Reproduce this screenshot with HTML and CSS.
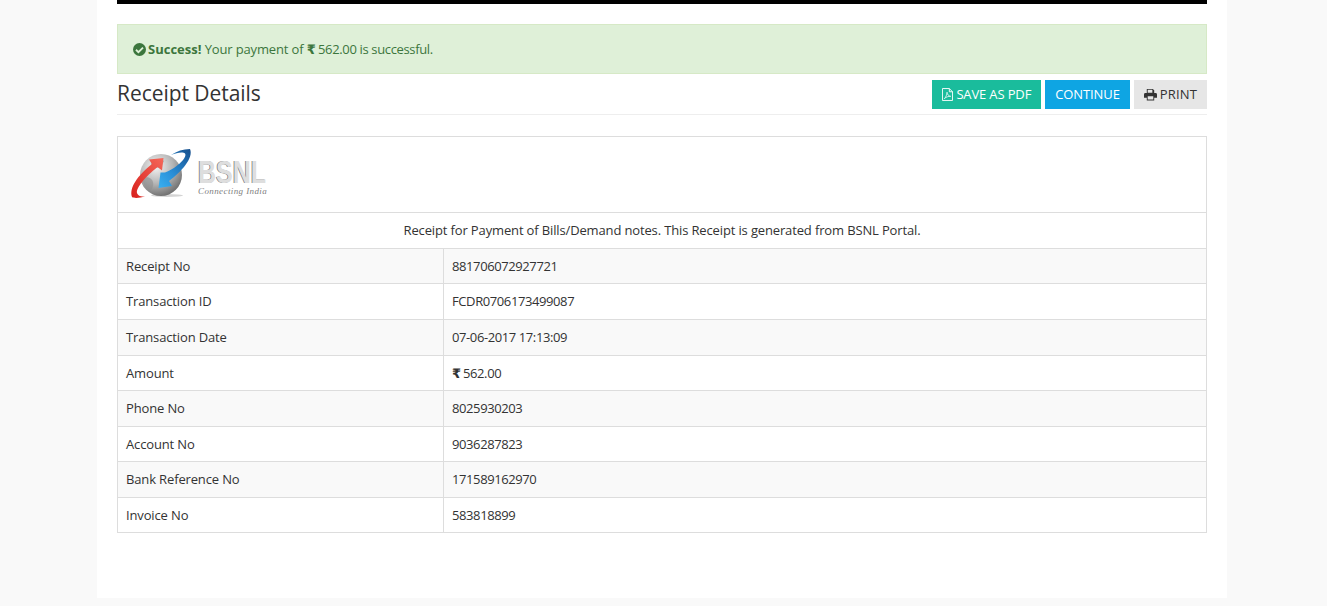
FILE: index.html
```html
<!DOCTYPE html>
<html>

<head>
    <meta charset="UTF-8">
    <title>Receipt Details</title>
    <link rel="stylesheet" href="styles.css">
</head>

<body>
    <div class="container">
        <div class="top-bar"></div>

        <div class="alert-success">
            <svg class="icon-check" viewBox="0 0 24 24">
                <circle cx="12" cy="12" r="12" fill="#3c763d"></circle>
                <path d="M5.500 12.500l4.500 4.500 8.500-8.500" fill="none" stroke="#dff0d8" stroke-width="3.400"></path>
            </svg>
            <div><strong>Success!</strong> Your payment of <span class="rupee">₹</span> <span class="tight">562.00 is successful.</span></div>
        </div>

        <div class="page-header">
            <h3>Receipt Details</h3>
            <div class="actions">
                <a class="btn btn-pdf">
                    <svg class="icon-btn" viewBox="0 0 12 14">
                        <path d="M.5.5h7.500l3.500 3.500v9.500h-11z M8 .5v3.500h3.500" fill="none" stroke="#fff" stroke-width="1"></path>
                        <path d="M2.500 11.500c1.500-1 3-4.500 3-7 .2 2.500 1.500 4 4 4.500-2.500-.2-5 .8-7 2.500z" fill="none" stroke="#fff" stroke-width=".8"></path>
                    </svg>
                    SAVE AS PDF
                </a>
                <a class="btn btn-continue">CONTINUE</a>
                <a class="btn btn-print">
                    <svg class="icon-btn icon-print" viewBox="0 0 14 13">
                        <path d="M3 5V.5h6.500L11 2v3h1.500A1.500 1.500 0 0 1 14 6.500V10h-3v3H3v-3H0V6.500A1.500 1.500 0 0 1 1.500 5z" fill="#333"></path>
                        <path d="M4 1.500h5v3H4z M4 8.500h6v3.500H4z" fill="#e6e6e6"></path>
                    </svg>
                    PRINT
                </a>
            </div>
        </div>

        <table class="receipt">
            <colgroup>
                <col class="col-label">
                <col>
            </colgroup>
            <tr>
                <td class="logo-cell" colspan="2">
                    <div class="logo">
                        <svg class="logo-mark" viewBox="0 0 60 52">
                            <defs>
                                <radialGradient id="globe" cx="38%" cy="30%" r="75%">
                                    <stop offset="0" stop-color="#f4f4f4"></stop>
                                    <stop offset=".55" stop-color="#b4b4b4"></stop>
                                    <stop offset="1" stop-color="#6a6a6a"></stop>
                                </radialGradient>
                                <linearGradient id="red" x1="0" y1="1" x2="1" y2="0">
                                    <stop offset="0" stop-color="#d8201c"></stop>
                                    <stop offset="1" stop-color="#f5685a"></stop>
                                </linearGradient>
                                <linearGradient id="blue" x1="1" y1="0" x2="0" y2="1">
                                    <stop offset="0" stop-color="#174f8c"></stop>
                                    <stop offset=".6" stop-color="#2a8fd8"></stop>
                                    <stop offset="1" stop-color="#3ab0f0"></stop>
                                </linearGradient>
                            </defs>
                            <ellipse cx="36" cy="47.500" rx="16" ry="1.500" fill="#d4d4d4"></ellipse>
                            <circle cx="30" cy="27" r="21" fill="url(#globe)"></circle>
                            <path d="M20 14c4-3 10-3 13-1l-3 6-5 1-5-3z M12 30c4-2 9 0 10 4s-1 8-4 9c-3-3-7-8-6-13z" fill="#8f8f8f" opacity=".6"></path>
                            <path d="M1 49C-2 40 6 28 21 16l-3-4.500L32.500 10 31 22.500 26.500 19C14 29 5 40 6 45c1 3 4 3.500 8 3.500-5 1.500-11 2-13 .5z" fill="url(#red)"></path>
                            <path d="M59 1c-7 0-13 2-19 6 6-2.500 12-3.500 14-1.500 2.500 3-6 13.500-20 19l-4.500 0L27.500 40 41 38l-3-5C50 24 63 10 59 1z" fill="url(#blue)"></path>
                        </svg>
                        <div class="logo-text">
                            <div class="logo-name">BSNL</div>
                            <div class="logo-tag">Connecting India</div>
                        </div>
                    </div>
                </td>
            </tr>
            <tr>
                <td class="caption" colspan="2">Receipt for Payment of Bills/Demand notes. This Receipt is generated from BSNL Portal.</td>
            </tr>
            <tr class="odd">
                <td>Receipt No</td>
                <td class="value">881706072927721</td>
            </tr>
            <tr>
                <td>Transaction ID</td>
                <td class="value">FCDR0706173499087</td>
            </tr>
            <tr class="odd">
                <td>Transaction Date</td>
                <td class="value">07-06-2017 17:13:09</td>
            </tr>
            <tr>
                <td>Amount</td>
                <td class="value"><span class="rupee">₹</span> 562.00</td>
            </tr>
            <tr class="odd">
                <td>Phone No</td>
                <td class="value">8025930203</td>
            </tr>
            <tr>
                <td>Account No</td>
                <td class="value">9036287823</td>
            </tr>
            <tr class="odd">
                <td>Bank Reference No</td>
                <td class="value">171589162970</td>
            </tr>
            <tr>
                <td>Invoice No</td>
                <td class="value">583818899</td>
            </tr>
        </table>
    </div>
</body>
</html>
```

FILE: styles.css
```css
body {
    font-family: 'Open Sans', 'Liberation Sans', sans-serif;
    font-size: 13px;
    line-height: 1.42857;
    letter-spacing: -0.14px;
    color: #333;
    background: #f9f9f9;
    margin: 0;
    padding-right: 3px;
}

.container {
    width: 1090px;
    height: 598px;
    margin: 0 auto;
    padding: 0 20px;
    background: #fff;
}

.top-bar {
    height: 4px;
    background: #000;
    margin-bottom: 20px;
}

.alert-success {
    display: flex;
    align-items: center;
    gap: 2px;
    height: 48px;
    padding: 0 15px;
    background: #dff0d8;
    border: 1px solid #d6e9c6;
    color: #3c763d;
}

.alert-success strong {
    letter-spacing: 0;
}

.tight {
    letter-spacing: -0.35px;
}

.icon-check {
    width: 13px;
    height: 13px;
}

.rupee {
    font-family: 'Liberation Sans', 'DejaVu Sans', sans-serif;
    font-weight: bold;
    font-size: 13px;
    line-height: 1;
    letter-spacing: -1px;
}

.page-header {
    display: flex;
    justify-content: space-between;
    height: 34px;
    margin: 6px 0 21px;
    border-bottom: 1px solid #eee;
}

h3 {
    margin: 0;
    font-size: 21px;
    font-weight: 400;
    line-height: 27px;
    letter-spacing: -0.05px;
}

.actions {
    display: flex;
    gap: 4px;
    height: 29px;
}

.btn {
    display: flex;
    align-items: center;
    padding: 0 10px;
    cursor: pointer;
}

.btn-pdf {
    background: #1abc9c;
    color: #fff;
}

.btn-continue {
    background: #0ea5e3;
    color: #fff;
    letter-spacing: -0.1px;
}

.btn-print {
    background: #e6e6e6;
    color: #333;
    letter-spacing: .15px;
}

.icon-btn {
    width: 11px;
    height: 13px;
    margin-right: 3px;
}

.icon-print {
    width: 13px;
}

.receipt {
    width: 100%;
    border-collapse: collapse;
    table-layout: fixed;
}

.col-label {
    width: 326px;
}

.receipt td {
    border: 1px solid #ddd;
    padding: 8px;
}

.receipt .logo-cell {
    padding: 11px 13px 12.35px;
}

.receipt .value {
    letter-spacing: -0.4px;
}

.logo {
    display: flex;
    height: 52px;
}

.logo-mark {
    width: 60px;
    height: 52px;
    margin-right: 7px;
    overflow: visible;
}

.logo-text {
    padding-top: 11px;
    width: 70px;
}

.logo-name {
    font-family: 'Liberation Sans', sans-serif;
    font-weight: bold;
    font-size: 32px;
    line-height: 27px;
    letter-spacing: 0;
    color: #dedede;
    text-shadow: -1px 0 0 #777;
    transform: scaleX(.78);
    transform-origin: left;
}

.logo-tag {
    font-family: 'Liberation Serif', serif;
    font-style: italic;
    font-size: 9px;
    line-height: 11px;
    letter-spacing: .4px;
    color: #808080;
    white-space: nowrap;
}

.caption {
    text-align: center;
}

.odd {
    background: #f9f9f9;
}
```
